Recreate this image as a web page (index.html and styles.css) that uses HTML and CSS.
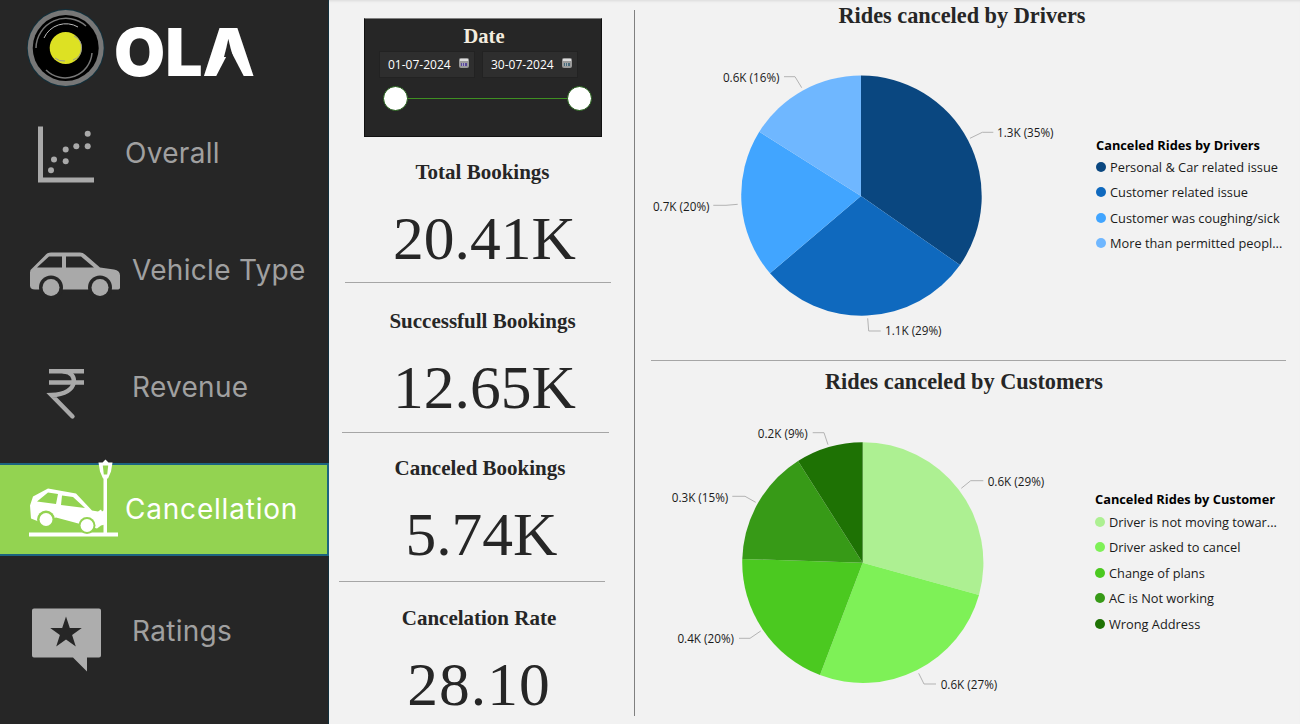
FILE: index.html
```html
<!DOCTYPE html>
<html lang="en">

<head>
    <meta charset="UTF-8">
    <meta name="viewport" content="width=device-width, initial-scale=1.0">
    <title>OLA Cancellation Dashboard</title>
    <link rel="stylesheet" href="styles.css">
</head>

<body>
    <aside class="sidebar">
        <div class="logo">
            <svg class="logo-mark" viewBox="26 10 80 80">
                <circle cx="65.7" cy="50" r="39" fill="#12303c" />
                <circle cx="65.7" cy="50" r="38" fill="#777" />
                <circle cx="65.7" cy="50" r="33" fill="#000" />
                <path d="M36 50a30 30 0 0 1 50-22M92 55a27 27 0 0 1-46 17" fill="none" stroke="#777" stroke-width="1.5" />
                <path d="M44 40a24 24 0 0 1 34-11" fill="none" stroke="#bbb" stroke-width="1" />
                <circle cx="65.7" cy="50" r="16" fill="#dde123" />
                <path d="M74 38a13 13 0 0 1-1 24" fill="none" stroke="#999" stroke-width="1" />
                <path d="M55 60a13 13 0 0 0 10 3" fill="none" stroke="#999" stroke-width="1" />
            </svg>
            <span class="logo-word">OLA</span>
        </div>
        <nav class="nav">
            <a class="nav-item">
                <svg class="nav-icon" viewBox="24 108.5 100 90" fill="#a9a9a9">
                    <path d="M38 126h5v51h51v5H38z" />
                    <circle cx="87.7" cy="133.3" r="3" />
                    <circle cx="87.7" cy="145.7" r="3" />
                    <circle cx="76.3" cy="145.7" r="3" />
                    <circle cx="65.7" cy="149" r="3" />
                    <circle cx="65.7" cy="160.7" r="3" />
                    <circle cx="54" cy="159" r="3" />
                    <circle cx="51" cy="169.7" r="3" />
                </svg>
                <span class="nav-label">Overall</span>
            </a>
            <a class="nav-item">
                <svg class="nav-icon" viewBox="24 225.5 100 90" fill="#a9a9a9">
                    <path d="M33 267l12-12q2-3 6-3h29q3 0 5 2l15 13 14 2q6 1 6 6v12q0 2-3 2H35q-5 0-5-4v-13q0-3 3-5z" />
                    <path d="M37 267l12-11h13v11zM66 256h15l13 11H66z" fill="#262626" />
                    <circle cx="51" cy="287" r="12" fill="#262626" />
                    <circle cx="100" cy="287" r="12" fill="#262626" />
                    <circle cx="51" cy="287" r="8.5" />
                    <circle cx="100" cy="287" r="8.5" />
                </svg>
                <span class="nav-label">Vehicle Type</span>
            </a>
            <a class="nav-item">
                <svg class="nav-icon" viewBox="24 342.5 100 90" fill="none" stroke="#a9a9a9" stroke-width="4.4">
                    <path d="M49 370.7h35M49 382h35" />
                    <path d="M64 371c14 0 16 23-12.500 23.500l21 21.500" stroke-linecap="round" />
                </svg>
                <span class="nav-label">Revenue</span>
            </a>
            <a class="nav-item nav-item-active">
                <svg class="nav-icon" viewBox="24 464.5 100 90" fill="#fff">
                    <path d="M29 532h89v4H29z" />
                    <path d="M103.500 477h3.500v56h-3.500z" />
                    <path d="M105.500 459l3 3h4l-1.500 9-3 7h-5l-3-7-1.500-9h4z" />
                    <path d="M102.800 465h5.400l-1 9h-3.400z" fill="#93d351" />
                    <path d="M30 505l3-9 15-8 28 5 16 17 6 1 3-2 1 2 3-2v15l-4 1-4 3-41-11-15 5-10-4z" />
                    <path d="M37 501l11-9 10 1.500-2 10zM62 495l11 1.500 12 11-24-3z" fill="#93d351" />
                    <circle cx="46" cy="519" r="9" fill="#93d351" />
                    <circle cx="46" cy="519" r="6.500" />
                    <circle cx="87" cy="525" r="8.500" fill="#93d351" />
                    <circle cx="87" cy="525" r="6.500" />
                </svg>
                <span class="nav-label">Cancellation</span>
            </a>
            <a class="nav-item">
                <svg class="nav-icon" viewBox="24 586.500 100 90" fill="#adadad">
                    <path d="M34 608h65q2 0 2 2v45q0 2-2 2H87v14l-14-14H34q-2 0-2-2v-45q0-2 2-2z" />
                    <path d="M66 616l3.800 11.500h12l-9.700 7 3.700 11.500-9.800-7.100-9.800 7.100 3.700-11.500-9.700-7h12z" fill="#262626" />
                </svg>
                <span class="nav-label">Ratings</span>
            </a>
        </nav>
    </aside>

    <main class="main">
        <section class="kpi-col">
            <div class="date-box">
                <div class="date-title">Date</div>
                <div class="date-inputs">
                    <div class="date-input">
                        <span>01-07-2024</span>
                        <svg class="cal-icon" viewBox="0 0 10 10">
                            <rect x="0" y="0" width="10" height="10" rx="2" fill="#9a9a9a" />
                            <rect x="1" y="1" width="8" height="2" fill="#ddd" />
                            <path d="M2 5h6v3H2z" fill="#5a4a9a" />
                            <path d="M3.500 5v3M5.500 5v3" stroke="#ddd" stroke-width=".6" />
                        </svg>
                    </div>
                    <div class="date-input">
                        <span>30-07-2024</span>
                        <svg class="cal-icon" viewBox="0 0 10 10">
                            <rect x="0" y="0" width="10" height="10" rx="2" fill="#9a9a9a" />
                            <rect x="1" y="1" width="8" height="2" fill="#ddd" />
                            <path d="M2 5h6v3H2z" fill="#4a6a7a" />
                            <path d="M3.500 5v3M5.500 5v3" stroke="#ddd" stroke-width=".6" />
                        </svg>
                    </div>
                </div>
                <div class="slider">
                    <span class="slider-thumb"></span>
                    <span class="slider-track"></span>
                    <span class="slider-thumb"></span>
                </div>
            </div>

            <div class="kpi kpi-total">
                <div class="kpi-label">Total Bookings</div>
                <div class="kpi-value">20.41K</div>
            </div>
            <hr class="kpi-rule kpi-rule-1">
            <div class="kpi kpi-success">
                <div class="kpi-label">Successfull Bookings</div>
                <div class="kpi-value">12.65K</div>
            </div>
            <hr class="kpi-rule kpi-rule-2">
            <div class="kpi kpi-canceled">
                <div class="kpi-label">Canceled Bookings</div>
                <div class="kpi-value">5.74K</div>
            </div>
            <hr class="kpi-rule kpi-rule-3">
            <div class="kpi kpi-rate">
                <div class="kpi-label">Cancelation Rate</div>
                <div class="kpi-value">28.10</div>
            </div>
        </section>

        <div class="col-rule"></div>

        <section class="chart-col">
            <div class="chart chart-drivers">
                <h2 class="chart-title">Rides canceled by Drivers</h2>
                <div class="chart-body">
                    <svg class="pie" width="450" height="325" viewBox="640 30 450 325">
                        <path d="M861 196V75.500A120.500 120.500 0 0 1 960 265z" fill="#0a4780" />
                        <path d="M861 196L960 265A120.500 120.500 0 0 1 770 273.300z" fill="#0f69be" />
                        <path d="M861 196L770 273.300A120.500 120.500 0 0 1 759.300 131.700z" fill="#41a5ff" />
                        <path d="M861 196L759.300 131.700A120.500 120.500 0 0 1 861 75.500z" fill="#6fb7ff" />
                        <g class="leaders">
                            <path d="M970 138.300l12.300-6h11" />
                            <path d="M867.700 318.300l1 12.700h12" />
                            <path d="M737.700 204.300l-11.700 1h-12.700" />
                            <path d="M801.700 87.700l-6.700-11h-11" />
                        </g>
                        <g class="pie-labels">
                            <text x="997" y="137">1.3K (35%)</text>
                            <text x="885" y="335">1.1K (29%)</text>
                            <text x="709.500" y="211" text-anchor="end">0.7K (20%)</text>
                            <text x="779.500" y="81.500" text-anchor="end">0.6K (16%)</text>
                        </g>
                    </svg>
                    <div class="legend">
                        <div class="legend-title">Canceled Rides by Drivers</div>
                        <div class="legend-item"><span class="dot dot-d1"></span>Personal &amp; Car related issue</div>
                        <div class="legend-item"><span class="dot dot-d2"></span>Customer related issue</div>
                        <div class="legend-item"><span class="dot dot-d3"></span>Customer was coughing/sick</div>
                        <div class="legend-item"><span class="dot dot-d4"></span>More than permitted peopl...</div>
                    </div>
                </div>
            </div>

            <hr class="chart-rule">

            <div class="chart chart-customers">
                <h2 class="chart-title">Rides canceled by Customers</h2>
                <div class="chart-body">
                    <svg class="pie" width="450" height="320" viewBox="640 400 450 320">
                        <path d="M862.700 562.700V442.200A120.500 120.500 0 0 1 979 595z" fill="#adf092" />
                        <path d="M862.700 562.700L979 595A120.500 120.500 0 0 1 820 675z" fill="#7ef157" />
                        <path d="M862.700 562.700L820 675A120.500 120.500 0 0 1 742.300 559z" fill="#4bc920" />
                        <path d="M862.700 562.700L742.300 559A120.500 120.500 0 0 1 798 461z" fill="#379a17" />
                        <path d="M862.700 562.700L798 461A120.500 120.500 0 0 1 862.700 442.200z" fill="#1e7204" />
                        <g class="leaders">
                            <path d="M961.300 488.300l9.400-7.600h12.600" />
                            <path d="M918.700 673.300l5.300 10.700h12" />
                            <path d="M760.700 631l-10.700 7.300h-11" />
                            <path d="M755.700 502.300l-10.700-6h-12.700" />
                            <path d="M828 444.700l-4-12h-11.300" />
                        </g>
                        <g class="pie-labels">
                            <text x="987.700" y="485.500">0.6K (29%)</text>
                            <text x="940.700" y="688.500">0.6K (27%)</text>
                            <text x="734" y="643" text-anchor="end">0.4K (20%)</text>
                            <text x="728.300" y="501.500" text-anchor="end">0.3K (15%)</text>
                            <text x="807.700" y="437.500" text-anchor="end">0.2K (9%)</text>
                        </g>
                    </svg>
                    <div class="legend">
                        <div class="legend-title">Canceled Rides by Customer</div>
                        <div class="legend-item"><span class="dot dot-c1"></span>Driver is not moving towar...</div>
                        <div class="legend-item"><span class="dot dot-c2"></span>Driver asked to cancel</div>
                        <div class="legend-item"><span class="dot dot-c3"></span>Change of plans</div>
                        <div class="legend-item"><span class="dot dot-c4"></span>AC is Not working</div>
                        <div class="legend-item"><span class="dot dot-c5"></span>Wrong Address</div>
                    </div>
                </div>
            </div>
        </section>
    </main>
</body>

</html>
```

FILE: styles.css
```css
* {
    box-sizing: border-box;
}

html,
body {
    height: 100%;
}

body {
    margin: 0;
    display: flex;
    overflow: hidden;
    background-color: #f2f2f2;
    font-family: "Open Sans", sans-serif;
}

/* Sidebar */

.sidebar {
    flex: none;
    width: 329px;
    height: 724px;
    background-color: #262626;
    border-right: 1px solid #12303c;
}

.logo {
    display: flex;
    align-items: center;
    height: 95px;
    padding: 0 0 0 26px;
}

.logo-mark {
    flex: none;
    width: 80px;
    height: 80px;
}

.logo-word {
    position: relative;
    margin-left: 8px;
    margin-top: 8px;
    color: #ffffff;
    font-family: Inter, sans-serif;
    font-size: 66px;
    font-weight: 900;
    line-height: 1;
}

/* covers the bar of the A, the mark has an open notch */
.logo-word::after {
    content: "";
    position: absolute;
    right: 11px;
    bottom: 8px;
    width: 28px;
    height: 27px;
    background-color: #262626;
    clip-path: polygon(50% 0, 100% 100%, 0 100%);
}

.nav-item {
    display: flex;
    align-items: center;
    height: 117px;
    color: #a0a0a0;
}

.nav-icon {
    flex: none;
    width: 100px;
    height: 90px;
    margin-left: 24px;
    overflow: visible;
}

.nav-label {
    margin-left: 8px;
    margin-bottom: 2px;
    font-family: Inter, sans-serif;
    font-size: 28px;
    font-weight: 400;
    letter-spacing: 0.3px;
}

.nav-item:first-child .nav-label {
    margin-left: 1px;
}

.nav-item-active {
    height: 93px;
    margin: 17px 0;
    margin-right: -1px;
    color: #ffffff;
    background-color: #93d351;
    border-top: 2px solid #1c6480;
    border-bottom: 2px solid #1c6480;
    border-right: 2px solid #1c6480;
}

.nav-item-active .nav-label {
    margin-left: 1px;
    letter-spacing: 0.8px;
}

/* Main area */

.main {
    flex: 1;
    display: flex;
    height: 724px;
    box-shadow: inset 0 3px 3px -2px rgba(0, 0, 0, 0.1);
}

.kpi-col {
    flex: none;
    width: 305px;
    padding-top: 18px;
    color: #262626;
    font-family: "Liberation Serif", serif;
}

.date-box {
    width: 238px;
    height: 119px;
    margin-left: 35px;
    padding: 6px 15px 0;
    background-color: #262626;
    border: 1px solid #111111;
    border-top-color: #808080;
}

.date-title {
    padding-left: 2px;
    color: #f3ecdf;
    font-size: 20.500px;
    font-weight: bold;
    line-height: 22px;
    text-align: center;
}

.date-inputs {
    display: flex;
    gap: 7px;
    margin-top: 4px;
    margin-left: -1px;
}

.date-input {
    display: flex;
    align-items: center;
    justify-content: space-between;
    width: 96px;
    height: 27px;
    padding: 0 5px 0 8px;
    color: #ffffff;
    font-family: "Open Sans", sans-serif;
    font-size: 12px;
    background-color: #2e2e2e;
    border: 1px solid #222222;
}

.cal-icon {
    width: 10px;
    height: 10px;
    margin-bottom: 3px;
}

.slider {
    display: flex;
    align-items: center;
    width: 209px;
    margin-top: 8px;
    margin-left: 3px;
}

.slider-thumb {
    flex: none;
    width: 25px;
    height: 25px;
    background-color: #ffffff;
    border: 1.500px solid #1f5a14;
    border-radius: 50%;
}

.slider-track {
    flex: 1;
    height: 1px;
    background-color: #3f8f22;
}

.kpi {
    text-align: center;
}

.kpi-total {
    padding: 23px 0 9px 2px;
}

.kpi-success {
    padding: 26px 0 10px 2px;
}

.kpi-canceled {
    padding: 23px 3px 12px 0;
}

.kpi-rate {
    padding: 24px 5px 0 0;
}

.kpi-label {
    height: 24px;
    margin-bottom: 19px;
    font-size: 21px;
    font-weight: bold;
    line-height: 24px;
}

.kpi-value {
    height: 70px;
    font-size: 61.500px;
    line-height: 70px;
}

.kpi-total .kpi-value,
.kpi-success .kpi-value {
    padding-left: 4px;
}

.kpi-canceled .kpi-value {
    padding-left: 3px;
}

.kpi-rate .kpi-value {
    letter-spacing: 1px;
}

.kpi-rule {
    height: 1px;
    margin: 0;
    background-color: #a6a6a6;
    border: none;
}

.kpi-rule-1 {
    width: 266px;
    margin-left: 16px;
}

.kpi-rule-2 {
    width: 267px;
    margin-left: 13px;
}

.kpi-rule-3 {
    width: 266px;
    margin-left: 10px;
}

.col-rule {
    flex: none;
    width: 1px;
    height: 706px;
    margin-top: 10px;
    background-color: #808080;
}

.chart-col {
    flex: 1;
    min-width: 0;
    padding-left: 5px;
}

.chart-title {
    height: 30px;
    margin: 0;
    color: #262626;
    font-family: "Liberation Serif", serif;
    font-size: 22.300px;
    font-weight: bold;
    line-height: 32px;
    text-align: center;
}

.chart-drivers .chart-title {
    padding-right: 16px;
}

.chart-customers .chart-title {
    height: 33px;
    padding-right: 12px;
    line-height: 30px;
}

.chart-body {
    display: flex;
}

.pie {
    flex: none;
}

.leaders path {
    fill: none;
    stroke: #b3b3b3;
    stroke-width: 1;
}

.pie-labels text {
    fill: #1a1a1a;
    font-family: "Open Sans", sans-serif;
    font-size: 11.700px;
}

.chart-rule {
    height: 1px;
    margin: 5px 14px 6px 11px;
    background-color: #a6a6a6;
    border: none;
}

.legend {
    padding-left: 6px;
    color: #1a1a1a;
    font-size: 12.800px;
}

.chart-drivers .legend {
    padding-top: 105px;
}

.chart-customers .legend {
    padding-top: 89px;
    margin-left: -1px;
}

.legend-title {
    height: 19px;
    color: #000000;
    font-weight: bold;
    line-height: 20px;
}

.chart-customers .legend-title {
    height: 20px;
}

.legend-item {
    display: flex;
    align-items: center;
    height: 25.500px;
    white-space: nowrap;
}

.dot {
    flex: none;
    width: 10px;
    height: 10px;
    margin-right: 4px;
    border-radius: 50%;
}

.dot-d1 { background-color: #0a4780; }
.dot-d2 { background-color: #0f69be; }
.dot-d3 { background-color: #41a5ff; }
.dot-d4 { background-color: #6fb7ff; }
.dot-c1 { background-color: #adf092; }
.dot-c2 { background-color: #7ef157; }
.dot-c3 { background-color: #4bc920; }
.dot-c4 { background-color: #379a17; }
.dot-c5 { background-color: #1e7204; }
```
